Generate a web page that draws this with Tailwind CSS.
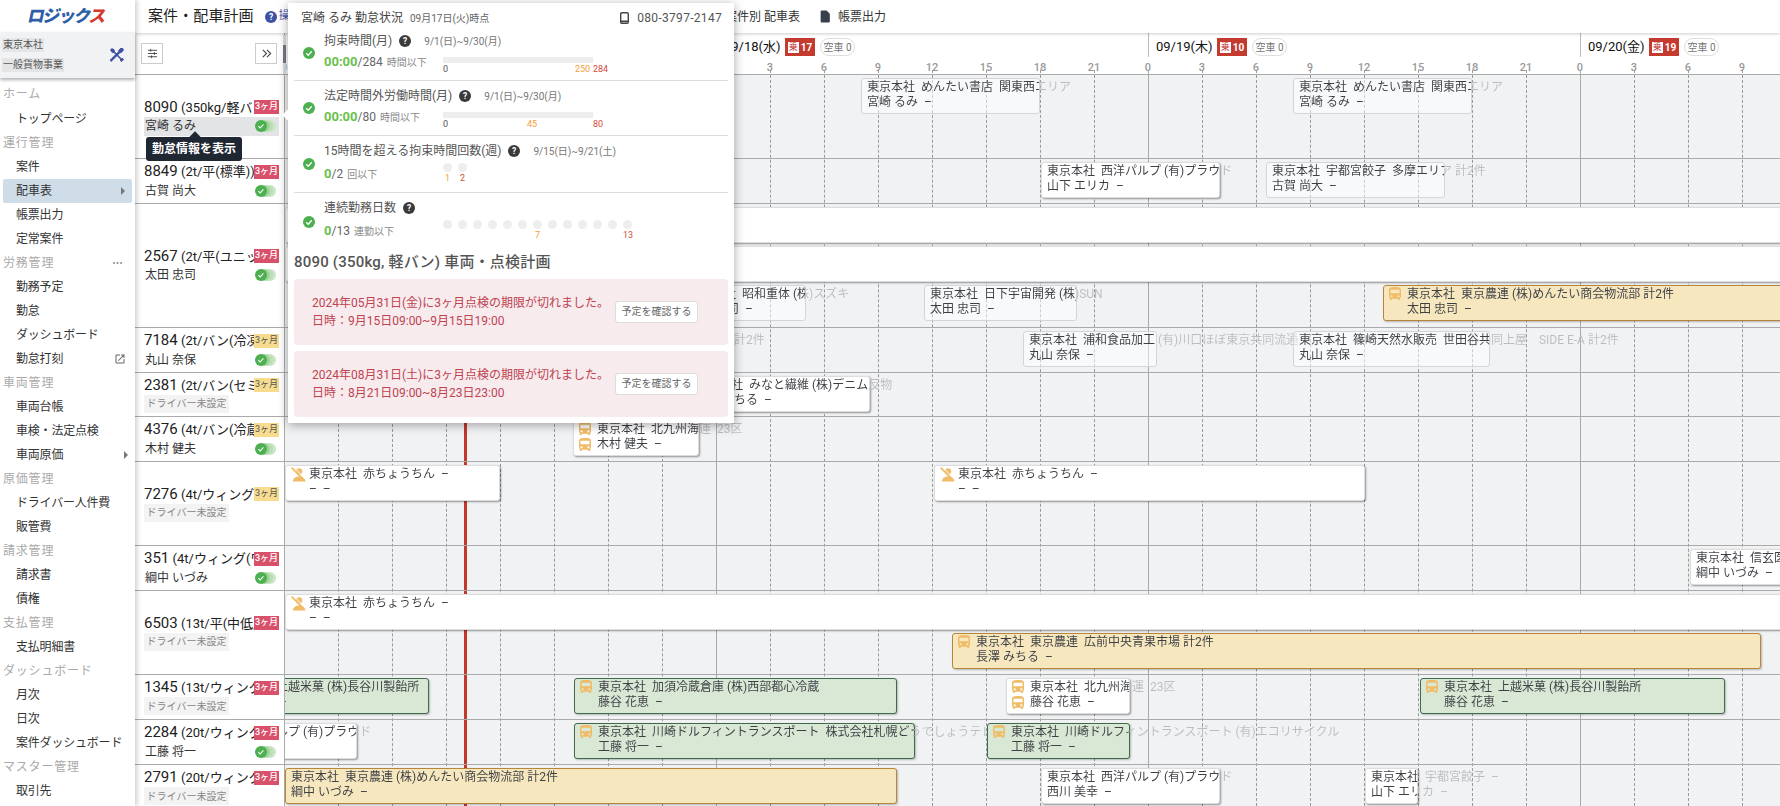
<!DOCTYPE html>
<html lang="ja">
<head>
  <meta charset="UTF-8" />
  <title>案件・配車計画</title>
  <script src="https://cdn.jsdelivr.net/npm/@tailwindcss/browser@4"></script>
</head>
<body class="h-screen overflow-hidden bg-white text-[#333] font-['Roboto','Noto_Sans_CJK_JP',sans-serif]">
  <div class="relative flex h-[806px] w-[1780px] overflow-hidden">

    <!-- sidebar -->
    <aside class="relative z-20 flex h-full w-[135px] shrink-0 flex-col bg-white shadow-[2px_0_5px_rgba(0,0,0,0.2)]">
      <div class="flex h-[32px] items-center justify-center pr-[2px]">
        <span class="-skew-x-12 text-[17px] font-black leading-none tracking-[-1.5px] text-[#2f5ea8]">ロジック<span class="text-[#d5382c]">ス</span></span>
      </div>
      <div class="flex h-[46px] items-center justify-between bg-[#f1f2f4] pr-[11px] pl-[2px] shadow-[0_2px_3px_rgba(0,0,0,0.3)]">
        <div class="flex flex-col items-start gap-[6px] text-[10px] leading-[14px] text-[#555]">
          <span class="bg-[#e4e5e6] px-[1px]">東京本社</span>
          <span class="bg-[#e4e5e6] px-[1px]">一般貨物事業</span>
        </div>
        <svg class="size-[14px]" viewBox="0 0 24 24" fill="#3f51a5" stroke="#3f51a5" stroke-width="1.6" stroke-linejoin="round"><path d="M3 1l4 2 1 4 11 11 3 0 1 2-3 3-2-1 0-3L7 8 3 7 1 3z"/><path d="M22 1l1 3-4 4-2 0-12 12-3 3-2-2 3-3 12-12 0-2 4-4z"/></svg>
      </div>
      <nav id="nav" class="mt-[4px] flex flex-col"></nav>
    </aside>

    <div class="flex min-w-0 flex-1 flex-col">
      <!-- top bar -->
      <header class="relative z-10 flex h-[33px] shrink-0 items-center bg-white pl-[13px] shadow-[0_1px_3px_rgba(0,0,0,0.2)]">
        <h1 class="text-[15px] leading-none tracking-[0.1px] text-[#222]">案件・配車計画</h1>
        <svg class="ml-[11px] size-[12px]" viewBox="0 0 24 24"><circle cx="12" cy="12" r="12" fill="#3f51a5"/><text x="12" y="18" text-anchor="middle" font-size="17" font-weight="700" fill="#fff">?</text></svg>
        <span class="ml-[2px] text-[11px] text-[#3f51a5]">操作</span>
        <span class="ml-auto text-[12px] text-[#333]">案件別 配車表</span>
        <svg class="ml-[19px] size-[13px]" viewBox="0 0 24 24" fill="#39404d"><path d="M5 1h9l6 6v14a2 2 0 0 1-2 2H5a2 2 0 0 1-2-2V3a2 2 0 0 1 2-2z"/></svg>
        <span class="ml-[6px] mr-[894px] text-[12px] text-[#333]">帳票出力</span>
      </header>

      <div class="relative flex min-h-0 flex-1">
        <!-- vehicle column -->
        <div class="relative z-[5] w-[150px] shrink-0 border-r border-[#aaa] bg-white">
          <div class="flex h-[41px] items-center justify-between pr-[7px] pl-[6px]">
            <button class="flex h-[21px] w-[22px] items-center justify-center border border-[#ccc] bg-white">
              <svg class="size-[11px]" viewBox="0 0 24 24" fill="none" stroke="#444" stroke-width="2"><path d="M2 5h20M2 12h20M2 19h20"/><path d="M8 2v6M16 9v6M10 16v6"/></svg>
            </button>
            <button class="flex h-[21px] w-[22px] items-center justify-center border border-[#ccc] bg-white">
              <svg class="size-[11px]" viewBox="0 0 24 24" fill="none" stroke="#444" stroke-width="2.5"><path d="M4 4l8 8-8 8M13 4l8 8-8 8"/></svg>
            </button>
          </div>
          <div class="absolute top-[2px] right-[-2px] h-[39px] w-[3px] bg-[#ddd]"><div class="mt-[10px] h-[18px] bg-[#778]"></div></div>
          <div id="vehicles"></div>
        </div>

        <!-- timeline -->
        <div class="relative min-w-0 flex-1 overflow-hidden bg-[#f1f2f4]">
          <div id="dayHead" class="flex h-[41px] bg-white"></div>
          <div id="gridLines" class="absolute top-[37px] bottom-0 left-[-1px] flex"></div>
          <div class="absolute top-[41px] bottom-0 left-[179px] w-[3px] bg-[#c0392b]"></div>
          <div id="rows" class="relative"></div>
        </div>
      </div>
    </div>

    <!-- tooltip -->
    <div class="absolute top-[137px] left-[146px] z-30 flex h-[24px] w-[96px] items-center justify-center rounded-[3px] bg-[#1f2733] text-[12px] font-bold text-white">
      <span class="absolute top-[-4px] left-[45px] size-[8px] rotate-45 bg-[#1f2733]"></span>
      <span class="relative">勤怠情報を表示</span>
    </div>

    <!-- attendance popup -->
    <div class="absolute top-[3px] left-[288px] z-40 h-[420px] w-[446px] bg-white px-[6px] shadow-[0_2px_10px_rgba(0,0,0,0.35)]">
      <span class="absolute top-[108px] left-[-4px] size-[8px] rotate-45 bg-white"></span>
      <div class="flex h-[23px] items-center justify-between pt-[7px] pr-[6px] pl-[7px]">
        <div class="flex items-center gap-[7px]">
          <span class="text-[12px] text-[#444]">宮崎 るみ 勤怠状況</span>
          <span class="text-[10px] text-[#666]">09月17日(火)時点</span>
        </div>
        <div class="flex items-center gap-[8px] text-[12px] tracking-[0.3px] text-[#555]">
          <svg class="h-[12px] w-[9px]" viewBox="0 0 9 12" fill="none" stroke="#444" stroke-width="1.4"><rect x="0.7" y="0.7" width="7.6" height="10.6" rx="1.2"/><path d="M0.7 9.3h7.6" stroke-width="1.6"/></svg>
          080-3797-2147
        </div>
      </div>

      <section class="flex h-[55px] items-center gap-[9px] border-b border-[#ddd] pl-[9px]">
        <svg class="size-[12px] shrink-0" viewBox="0 0 12 12"><circle cx="6" cy="6" r="6" fill="#4caf50"/><path d="M3.2 6.2l2 2 3.6-4" fill="none" stroke="#fff" stroke-width="1.3"/></svg>
        <div class="h-full pt-[5px]">
          <div class="flex h-[20px] items-center text-[12px] text-[#555]">拘束時間(月)
            <svg class="mr-[13px] ml-[7px] size-[12px]" viewBox="0 0 24 24"><circle cx="12" cy="12" r="12" fill="#3a3a3a"/><text x="12" y="18" text-anchor="middle" font-size="17" font-weight="700" fill="#fff">?</text></svg>
            <span class="text-[10px] text-[#777]">9/1(日)~9/30(月)</span></div>
          <div class="flex h-[22px]">
            <div class="flex w-[119px] items-center gap-[4px] text-[12px] text-[#666]"><span><b class="text-[13px] text-[#6abf4b]">00:00</b>/284</span><span class="text-[10px] text-[#888]">時間以下</span></div>
            <div class="relative mt-[6px] h-[6px] w-[150px] bg-[#eee] text-[9px] leading-[12px]">
              <span class="absolute top-[6px] left-0 text-[#555]">0</span><span class="absolute top-[6px] left-[132px] text-[#f5a033]">250</span><span class="absolute top-[6px] left-[150px] text-[#d64a3c]">284</span>
            </div>
          </div>
        </div>
      </section>

      <section class="flex h-[55px] items-center gap-[9px] border-b border-[#ddd] pl-[9px]">
        <svg class="size-[12px] shrink-0" viewBox="0 0 12 12"><circle cx="6" cy="6" r="6" fill="#4caf50"/><path d="M3.2 6.2l2 2 3.6-4" fill="none" stroke="#fff" stroke-width="1.3"/></svg>
        <div class="h-full pt-[5px]">
          <div class="flex h-[20px] items-center text-[12px] text-[#555]">法定時間外労働時間(月)
            <svg class="mr-[13px] ml-[7px] size-[12px]" viewBox="0 0 24 24"><circle cx="12" cy="12" r="12" fill="#3a3a3a"/><text x="12" y="18" text-anchor="middle" font-size="17" font-weight="700" fill="#fff">?</text></svg>
            <span class="text-[10px] text-[#777]">9/1(日)~9/30(月)</span></div>
          <div class="flex h-[22px]">
            <div class="flex w-[119px] items-center gap-[4px] text-[12px] text-[#666]"><span><b class="text-[13px] text-[#6abf4b]">00:00</b>/80</span><span class="text-[10px] text-[#888]">時間以下</span></div>
            <div class="relative mt-[6px] h-[6px] w-[150px] bg-[#eee] text-[9px] leading-[12px]">
              <span class="absolute top-[6px] left-0 text-[#555]">0</span><span class="absolute top-[6px] left-[84px] text-[#f5a033]">45</span><span class="absolute top-[6px] left-[150px] text-[#d64a3c]">80</span>
            </div>
          </div>
        </div>
      </section>

      <section class="flex h-[57px] items-center gap-[9px] border-b border-[#ddd] pl-[9px]">
        <svg class="size-[12px] shrink-0" viewBox="0 0 12 12"><circle cx="6" cy="6" r="6" fill="#4caf50"/><path d="M3.2 6.2l2 2 3.6-4" fill="none" stroke="#fff" stroke-width="1.3"/></svg>
        <div class="h-full pt-[5px]">
          <div class="flex h-[20px] items-center text-[12px] text-[#555]">15時間を超える拘束時間回数(週)
            <svg class="mr-[13px] ml-[7px] size-[12px]" viewBox="0 0 24 24"><circle cx="12" cy="12" r="12" fill="#3a3a3a"/><text x="12" y="18" text-anchor="middle" font-size="17" font-weight="700" fill="#fff">?</text></svg>
            <span class="text-[10px] text-[#777]">9/15(日)~9/21(土)</span></div>
          <div class="mt-[2px] flex h-[22px]">
            <div class="flex w-[119px] items-center gap-[4px] text-[12px] text-[#666]"><span><b class="text-[13px] text-[#6abf4b]">0</b>/2</span><span class="text-[10px] text-[#888]">回以下</span></div>
            <div class="flex text-center text-[9px] leading-[12px]">
              <div class="w-[15px]"><div class="size-[9px] rounded-full bg-[#eee]"></div><span class="block w-[9px] text-[#f5a033]">1</span></div>
              <div class="w-[15px]"><div class="size-[9px] rounded-full bg-[#eee]"></div><span class="block w-[9px] text-[#d64a3c]">2</span></div>
            </div>
          </div>
        </div>
      </section>

      <section class="flex h-[57px] items-center gap-[9px] pl-[9px]">
        <svg class="size-[12px] shrink-0" viewBox="0 0 12 12"><circle cx="6" cy="6" r="6" fill="#4caf50"/><path d="M3.2 6.2l2 2 3.6-4" fill="none" stroke="#fff" stroke-width="1.3"/></svg>
        <div class="h-full pt-[5px]">
          <div class="flex h-[20px] items-center text-[12px] text-[#555]">連続勤務日数
            <svg class="ml-[7px] size-[12px]" viewBox="0 0 24 24"><circle cx="12" cy="12" r="12" fill="#3a3a3a"/><text x="12" y="18" text-anchor="middle" font-size="17" font-weight="700" fill="#fff">?</text></svg></div>
          <div class="mt-[2px] flex h-[22px]">
            <div class="flex w-[119px] items-center gap-[4px] text-[12px] text-[#666]"><span><b class="text-[13px] text-[#6abf4b]">0</b>/13</span><span class="text-[10px] text-[#888]">連勤以下</span></div>
            <div id="dayDots" class="flex text-center text-[9px] leading-[12px]"></div>
          </div>
        </div>
      </section>

      <h2 class="flex h-[24px] items-center whitespace-pre text-[15px] font-medium tracking-[0.2px] text-[#555]">8090 (350kg, 軽バン) 車両・点検計画</h2>
      <div class="mt-[5px] flex flex-col gap-[6px]">
        <div class="flex h-[66px] items-center justify-between rounded-[4px] bg-[#f7ebee] pr-[30px] pl-[18px] text-[12px] leading-[18px] text-[#c0424f]">
          <div>2024年05月31日(金)に3ヶ月点検の期限が切れました。<br />日時：9月15日09:00~9月15日19:00</div>
          <button class="h-[22px] w-[83px] rounded-[3px] border border-[#ddd] bg-white text-[10px] text-[#666]">予定を確認する</button>
        </div>
        <div class="flex h-[66px] items-center justify-between rounded-[4px] bg-[#f7ebee] pr-[30px] pl-[18px] text-[12px] leading-[18px] text-[#c0424f]">
          <div>2024年08月31日(土)に3ヶ月点検の期限が切れました。<br />日時：8月21日09:00~8月23日23:00</div>
          <button class="h-[22px] w-[83px] rounded-[3px] border border-[#ddd] bg-white text-[10px] text-[#666]">予定を確認する</button>
        </div>
      </div>
    </div>
  </div>

  <script>
    // sidebar
    const navItems = [
      ['h','ホーム'],['i','トップページ'],['h','運行管理'],['i','案件'],['s','配車表'],['i','帳票出力'],['i','定常案件'],
      ['h','労務管理','dots'],['i','勤務予定'],['i','勤怠'],['i','ダッシュボード'],['i','勤怠打刻','ext'],
      ['h','車両管理'],['i','車両台帳'],['i','車検・法定点検'],['i','車両原価','arrow'],
      ['h','原価管理'],['i','ドライバー人件費'],['i','販管費'],['h','請求管理'],['i','請求書'],['i','債権'],
      ['h','支払管理'],['i','支払明細書'],['h','ダッシュボード'],['i','月次'],['i','日次'],['i','案件ダッシュボード'],
      ['h','マスター管理'],['i','取引先']
    ];
    const arrow = '<span class="mr-[7px] ml-auto h-0 w-0 border-y-[4px] border-l-[4px] border-y-transparent border-l-[#777]"></span>';
    const extras = {
      arrow: arrow,
      dots: '<span class="mr-[12px] ml-auto text-[9px] leading-none tracking-[0.5px] text-[#888]">•••</span>',
      ext: '<svg class="mr-[9px] ml-auto size-[12px]" viewBox="0 0 24 24" fill="#666"><path d="M19 19H5V5h7V3H5a2 2 0 0 0-2 2v14a2 2 0 0 0 2 2h14a2 2 0 0 0 2-2v-7h-2v7zM14 3v2h3.6l-9.8 9.8 1.4 1.4L19 6.4V10h2V3h-7z"/></svg>'
    };
    document.getElementById('nav').innerHTML = navItems.map(([kind, label, extra], i) => {
      if (kind === 'h') return `<div class="flex h-[24px] shrink-0 items-center pl-[3px] text-[12px] tracking-[0.8px] text-[#aaa]">${label}${extra ? extras[extra] : ''}</div>`;
      if (kind === 's') return `<div class="mx-[3px] flex h-[24px] shrink-0 items-center rounded-[2px] bg-[#cfdde9] pl-[13px] text-[12px] text-[#333]">${label}${arrow}</div>`;
      return `<div class="flex h-[24px] shrink-0 items-center pl-[16px] text-[12px] tracking-[-0.2px] text-[#333] ${i === 1 ? 'mt-[1px]' : ''}">${label}${extra ? extras[extra] : ''}</div>`;
    }).join('');

    // vehicle rows
    const vehicles = [
      { no: '8090', spec: '(350kg/軽バン)', badge: 'r', driver: '宮崎 るみ', h: 84, hover: true },
      { no: '8849', spec: '(2t/平(標準))', badge: 'r', driver: '古賀 尚大', h: 45 },
      { no: '2567', spec: '(2t/平(ユニック)', badge: 'r', driver: '太田 忠司', h: 124 },
      { no: '7184', spec: '(2t/バン(冷凍)', badge: 'y', driver: '丸山 奈保', h: 45 },
      { no: '2381', spec: '(2t/バン(セミ)', badge: 'y', h: 44 },
      { no: '4376', spec: '(4t/バン(冷蔵)', badge: 'y', driver: '木村 健夫', h: 45 },
      { no: '7276', spec: '(4t/ウィング(', badge: 'y', h: 84 },
      { no: '351', spec: '(4t/ウィング(ワ', badge: 'r', driver: '綱中 いづみ', h: 45 },
      { no: '6503', spec: '(13t/平(中低床)', badge: 'r', h: 84 },
      { no: '1345', spec: '(13t/ウィング', badge: 'r', h: 45 },
      { no: '2284', spec: '(20t/ウィング', badge: 'r', driver: '工藤 将一', h: 45 },
      { no: '2791', spec: '(20t/ウィング', badge: 'r', h: 45 }
    ];
    const toggle = '<svg class="h-[12px] w-[21px]" viewBox="0 0 21 12"><circle cx="15" cy="6" r="6" fill="#c8e6c4"/><circle cx="12.5" cy="6" r="6" fill="#b5dcb0" stroke="#d8eed5" stroke-width=".6"/><circle cx="9.5" cy="6" r="6" fill="#9dd197" stroke="#d8eed5" stroke-width=".6"/><circle cx="6" cy="6" r="6" fill="#4caf50"/><path d="M3.4 6.2l1.8 1.8 3.2-3.6" fill="none" stroke="#fff" stroke-width="1.1"/></svg>';
    document.getElementById('vehicles').innerHTML = vehicles.map(v => {
      const badge = v.badge === 'r'
        ? '<span class="flex h-[14px] w-[25px] shrink-0 items-center justify-center bg-[#d9506a] text-[9px] font-medium text-white">3ヶ月</span>'
        : '<span class="flex h-[14px] w-[25px] shrink-0 items-center justify-center bg-[#f7dc8f] text-[9px] text-[#555]">3ヶ月</span>';
      const second = v.driver
        ? `<div class="flex h-[19px] items-center justify-between pr-[3px] pl-[1px] text-[12px] text-[#333] ${v.hover ? 'bg-[#e2e4e6]' : ''}"><span>${v.driver}</span>${toggle}</div>`
        : '<div class="flex h-[19px] items-start"><span class="flex h-[18px] w-[85px] items-center justify-center bg-[#f3f3f3] text-[10px] text-[#888]">ドライバー未設定</span></div>';
      return `<div class="flex flex-col justify-center border-t border-[#aaa] pr-[5px] pl-[9px]" style="height:${v.h}px">
        <div class="flex h-[19px] items-center"><div class="min-w-0 flex-1 overflow-hidden whitespace-nowrap text-[13px] text-[#222]"><span class="text-[15px]">${v.no}</span> ${v.spec}</div>${badge}</div>
        ${second}
      </div>`;
    }).join('');

    // timeline header and grid
    const days = [['09/17(火)', 12], ['09/18(水)', 17], ['09/19(木)', 10], ['09/20(金)', 19]];
    const hours = [0, 3, 6, 9, 12, 15, 18, 21];
    document.getElementById('dayHead').innerHTML = days.map(([label, count]) => `
      <div class="flex w-[432px] shrink-0 flex-col">
        <div class="ml-[-1px] flex h-[24px] items-center border-l border-[#bbb] pt-[4px] pl-[7px]">
          <span class="mr-[6px] w-[55px] text-[13px] whitespace-nowrap text-[#111]">${label}</span>
          <span class="flex h-[18px] w-[30px] items-center justify-center gap-[2px] bg-[#c43a2f] text-[10px] font-bold text-white"><span class="flex size-[11px] items-center justify-center bg-white text-[9px] font-normal leading-none text-[#c43a2f]">乗</span>${count}</span>
          <span class="ml-[5px] flex h-[18px] w-[35px] items-center justify-center rounded-full border border-[#ddd] text-[10px] text-[#777]">空車 0</span>
        </div>
        <div class="ml-[-1px] flex h-[17px] items-center">${hours.map(h => `<span class="w-[54px] shrink-0"><span class="inline-block -translate-x-1/2 text-[11px] font-medium text-[#999]">${h}</span></span>`).join('')}</div>
      </div>`).join('');
    document.getElementById('gridLines').innerHTML = days.map(() => hours.map(h =>
      h === 0
        ? '<div class="h-full w-[54px] shrink-0 border-l border-[#aaa]"></div>'
        : '<div class="h-full w-[54px] shrink-0 border-l border-dashed border-[#999]"></div>'
    ).join('')).join('');

    // timeline cards: x and end are page coordinates, top is the offset inside the row
    const TL = 285;
    const BUS = '<svg class="h-[13px] w-[12px]" viewBox="4 2 16 19" preserveAspectRatio="none" fill="#f0bc68"><path d="M4 16c0 .88.39 1.67 1 2.22V20c0 .55.45 1 1 1h1c.55 0 1-.45 1-1v-1h8v1c0 .55.45 1 1 1h1c.55 0 1-.45 1-1v-1.78c.61-.55 1-1.34 1-2.22V6c0-3.5-3.58-4-8-4s-8 .5-8 4v10zm3.5 1c-.83 0-1.5-.67-1.5-1.5S6.67 14 7.5 14s1.5.67 1.5 1.5S8.33 17 7.5 17zm9 0c-.83 0-1.5-.67-1.5-1.5s.67-1.5 1.5-1.5 1.5.67 1.5 1.5-.67 1.5-1.5 1.5zm1.5-6H6V6h12v5z"/></svg>';
    const NOBODY = '<svg class="size-[15px]" viewBox="0 0 24 24" fill="#f0bc68"><circle cx="13" cy="7" r="5"/><path d="M3 23c0-5 5-8 10-8s10 3 10 8z"/><path d="M1 1l20 20" stroke="#f0bc68" stroke-width="3"/><path d="M4 0l20 20" stroke="#fff" stroke-width="1.5"/></svg>';
    const boxes = {
      ghost: 'border-[#d4d5d8] bg-white/50',
      white: 'border-[#ddd] bg-white shadow-[1px_1px_2px_rgba(0,0,0,0.4)]',
      green: 'border-[#3f6b4a] bg-[#d9e7d5] shadow-[1px_1px_2px_rgba(0,0,0,0.25)]',
      yellow: 'border-[#b8863b] bg-[#f6e7bf] shadow-[1px_1px_2px_rgba(0,0,0,0.25)]',
      bare: 'border-transparent'
    };
    const c = (x, end, kind, l1, l2, icon, top = 3) => ({ x, end, kind, l1, l2, icon, top });
    const HQ = '東京本社  ';
    const rows = [
      [c(861, 1040, 'ghost', HQ + 'めんたい書店  関東西エリア', '宮崎 るみ  –'), c(1293, 1472, 'ghost', HQ + 'めんたい書店  関東西エリア', '宮崎 るみ  –')],
      [c(1041, 1220, 'white', HQ + '西洋パルプ (有)プラウド', '山下 エリカ  –'), c(1266, 1445, 'ghost', HQ + '宇都宮餃子  多摩エリア 計2件', '古賀 尚大  –')],
      [c(285, 1790, 'white', '', '', null, 3), c(285, 1790, 'white', '', '', null, 42),
       c(682, 806, 'ghost', HQ + '昭和重体 (株)スズキ', '太田 忠司  –', null, 81), c(924, 1077, 'ghost', HQ + '日下宇宙開発 (株)SUN', '太田 忠司  –', null, 81),
       c(1383, 1790, 'yellow', HQ + '東京農連 (株)めんたい商会物流部 計2件', '太田 忠司  –', 'bus', 81)],
      [c(728, 729, 'bare', '計2件', ''), c(1023, 1157, 'ghost', HQ + '浦和食品加工 (有)川口ほぼ東京共同流通', '丸山 奈保  –'), c(1293, 1490, 'ghost', HQ + '篠崎天然水販売  世田谷共同上屋　SIDE E-A 計2件', '丸山 奈保  –')],
      [c(689, 870, 'white', HQ + 'みなと繊維 (株)デニム反物', '長澤 みちる  –')],
      [c(573, 699, 'white', HQ + '北九州海運  23区', '木村 健夫  –', 'bus2')],
      [c(285, 500, 'white', HQ + '赤ちょうちん  –', '–  –', 'nobody'), c(934, 1365, 'white', HQ + '赤ちょうちん  –', '–  –', 'nobody')],
      [c(1690, 1790, 'white', HQ + '信玄医薬品', '綱中 いづみ  –')],
      [c(285, 1790, 'white', HQ + '赤ちょうちん  –', '–  –', 'nobody'), c(952, 1761, 'yellow', HQ + '東京農連  広前中央青果市場 計2件', '長澤 みちる  –', 'bus', 42)],
      [c(198, 429, 'green', HQ + '上越米菓 (株)長谷川製飴所', '藤谷 花恵  –', 'bus'), c(574, 897, 'green', HQ + '加須冷蔵倉庫 (株)西部都心冷蔵', '藤谷 花恵  –', 'bus'),
       c(1006, 1130, 'white', HQ + '北九州海運  23区', '藤谷 花恵  –', 'bus2'), c(1420, 1725, 'green', HQ + '上越米菓 (株)長谷川製飴所', '藤谷 花恵  –', 'bus')],
      [c(180, 357, 'white', HQ + '西洋パルプ (有)プラウド', '西川 美幸  –'), c(574, 915, 'green', HQ + '川崎ドルフィントランスポート  株式会社札幌どうでしょうテレビ', '工藤 将一  –', 'bus'),
       c(987, 1130, 'green', HQ + '川崎ドルフィントランスポート (有)エコリサイクル', '工藤 将一  –', 'bus')],
      [c(285, 897, 'yellow', HQ + '東京農連 (株)めんたい商会物流部 計2件', '綱中 いづみ  –'), c(1041, 1220, 'white', HQ + '西洋パルプ (有)プラウド', '西川 美幸  –'), c(1365, 1418, 'white', HQ + '宇都宮餃子  –', '山下 エリカ  –')]
    ];

    function textLine(text, innerWidth) {
      // the part of a label that runs past its card is drawn faded
      const fade = `background-image:linear-gradient(to right,#3c3f44 ${innerWidth}px,#bcbdc0 ${innerWidth}px)`;
      return `<div class="w-max whitespace-pre bg-clip-text text-transparent" style="${fade}">${text}</div>`;
    }
    function card(k) {
      const w = k.end - k.x;
      const pad = k.icon ? 23 : 5;
      const topIcon = k.icon === 'bus' || k.icon === 'bus2' ? BUS : k.icon === 'nobody' ? NOBODY : '';
      const lowIcon = k.icon === 'bus2' ? BUS : '';
      return `<div class="absolute h-[36px] rounded-[3px] border ${boxes[k.kind]}" style="left:${k.x - TL}px;width:${w}px;top:${k.top}px">` +
        (topIcon ? `<span class="absolute top-[1px] left-[5px]">${topIcon}</span>` : '') +
        (lowIcon ? `<span class="absolute top-[17px] left-[5px]">${lowIcon}</span>` : '') +
        `<div class="pt-[1px] text-[12px] leading-[15px]" style="padding-left:${pad}px">` +
        (k.l1 ? textLine(k.l1, w - pad - 2) : '') + (k.l2 ? textLine(k.l2, w - pad - 2) : '') +
        `</div></div>`;
    }
    document.getElementById('rows').innerHTML = rows.map((cards, i) =>
      `<div class="relative border-t border-[#aaa]" style="height:${vehicles[i].h}px">${cards.map(card).join('')}</div>`
    ).join('');

    // dots of the consecutive work days meter
    const marks = { 7: ['7', 'text-[#f5a033]'], 13: ['13', 'text-[#d64a3c]'] };
    let dots = '';
    for (let n = 1; n <= 13; n++) {
      const m = marks[n];
      dots += `<div class="w-[15px]"><div class="size-[9px] rounded-full bg-[#eee]"></div>${m ? `<span class="block w-[9px] whitespace-nowrap ${m[1]}">${m[0]}</span>` : ''}</div>`;
    }
    document.getElementById('dayDots').innerHTML = dots;
  </script>
</body>
</html>
